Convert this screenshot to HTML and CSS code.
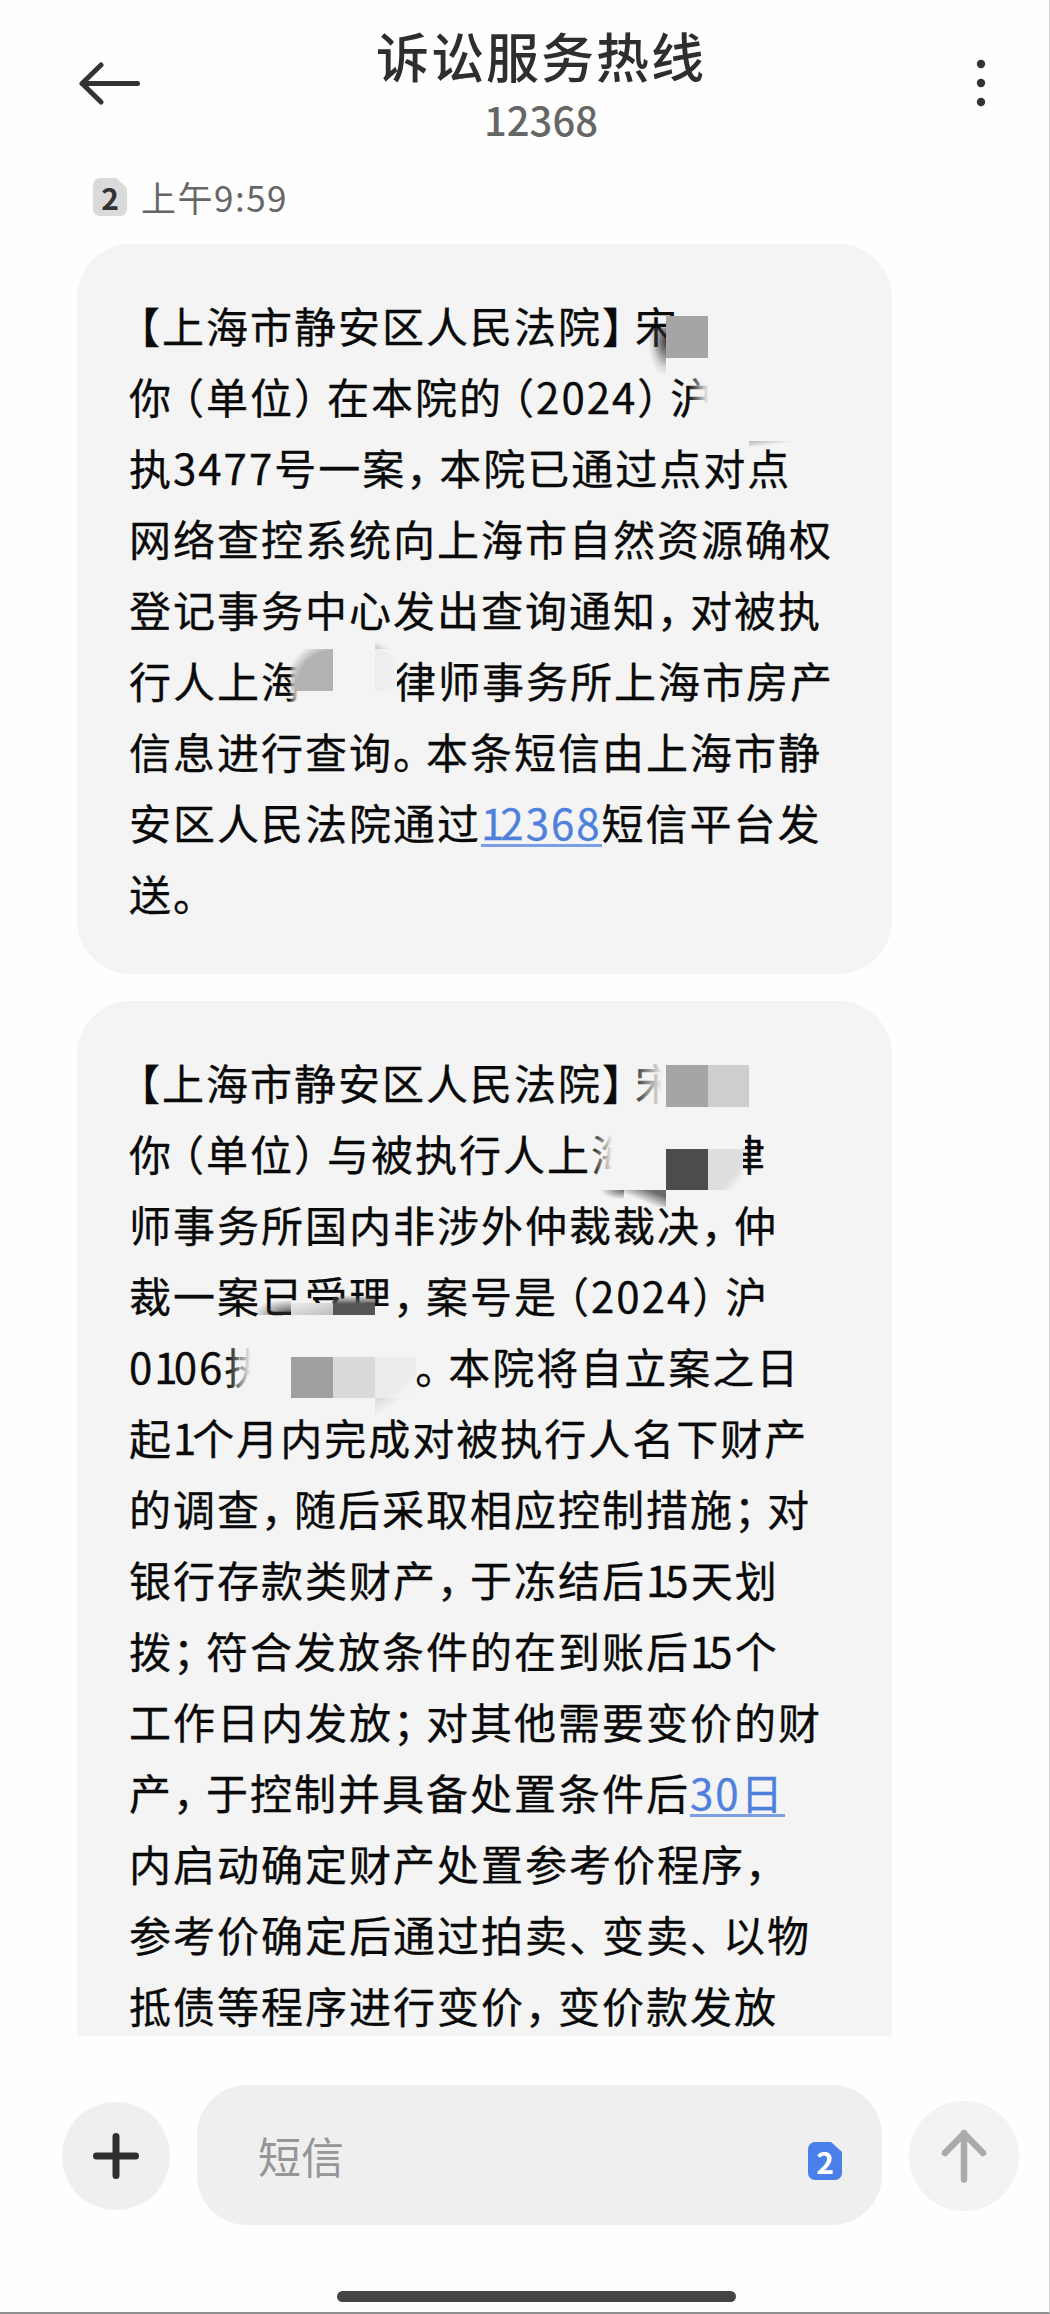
FILE: index.html
```html
<!DOCTYPE html>
<html lang="zh-CN">
<head>
    <meta charset="UTF-8">
    <meta name="viewport" content="width=device-width, initial-scale=1.0">
    <title>诉讼服务热线</title>
    <link rel="stylesheet" href="styles.css">
</head>
<body>
    <div class="phone">
        <header class="header">
            <svg class="back" viewBox="0 0 64 44" width="64" height="44">
                <path d="M23 4 L4 22.5 L23 41 M4 22.5 H59.5"/>
            </svg>
            <div class="heading">
                <h1>诉讼服务热线</h1>
                <p>12368</p>
            </div>
            <svg class="more" viewBox="0 0 10 50" width="10" height="50">
                <circle cx="5" cy="6" r="4.2"/>
                <circle cx="5" cy="25" r="4.2"/>
                <circle cx="5" cy="44" r="4.2"/>
            </svg>
        </header>

        <div class="stamp">
            <span class="sim">2</span>
            <span class="time">上午9:59</span>
        </div>

        <main class="messages">
            <div class="bubble">
                <p class="line">【上海市静安区人民法院】宋</p>
                <p class="line">你（单位）在本院的（2024）沪</p>
                <p class="line">执3477号一案，本院已通过点对点</p>
                <p class="line">网络查控系统向上海市自然资源确权</p>
                <p class="line">登记事务中心发出查询通知，对被执</p>
                <p class="line">行人上海<span class="gap"></span>律师事务所上海市房产</p>
                <p class="line">信息进行查询。本条短信由上海市静</p>
                <p class="line">安区人民法院通过<a href="#">12368</a>短信平台发</p>
                <p class="line">送。</p>
                <i class="mask m1-shade"></i>
                <i class="mask m1-name"></i>
                <i class="mask m1-case"></i>
                <i class="mask m1-edge"></i>
                <i class="mask m1-firm-fade"></i>
                <i class="mask m1-firm"></i>
                <i class="mask m1-firm-light"></i>
                <i class="mask m1-firm-tip"></i>
            </div>

            <div class="bubble">
                <p class="line">【上海市静安区人民法院】宋</p>
                <p class="line">你（单位）与被执行人上海<span class="gap firm"></span>律</p>
                <p class="line">师事务所国内非涉外仲裁裁决，仲</p>
                <p class="line">裁一案已受理，案号是（2024）沪</p>
                <p class="line">0106执<span class="gap wide"></span>。本院将自立案之日</p>
                <p class="line">起1个月内完成对被执行人名下财产</p>
                <p class="line">的调查，随后采取相应控制措施；对</p>
                <p class="line">银行存款类财产，于冻结后15天划</p>
                <p class="line">拨；符合发放条件的在到账后15个</p>
                <p class="line">工作日内发放；对其他需要变价的财</p>
                <p class="line">产，于控制并具备处置条件后<a href="#">30日</a></p>
                <p class="line">内启动确定财产处置参考价程序，</p>
                <p class="line">参考价确定后通过拍卖、变卖、以物</p>
                <p class="line">抵债等程序进行变价，变价款发放</p>
                <i class="mask m2-fade"></i>
                <i class="mask m2-name"></i>
                <i class="mask m2-name-light"></i>
                <i class="mask m2-firm-fade"></i>
                <i class="mask m2-firm"></i>
                <i class="mask m2-firm-light"></i>
                <i class="mask m2-firm-end"></i>
                <i class="mask m2-shade-left"></i>
                <i class="mask m2-shade"></i>
                <i class="mask m2-low-left"></i>
                <i class="mask m2-low-mid"></i>
                <i class="mask m2-low"></i>
                <i class="mask m2-low-right"></i>
                <i class="mask m2-low-end"></i>
                <i class="mask m2-case-fade"></i>
                <i class="mask m2-case-a"></i>
                <i class="mask m2-case-b"></i>
                <i class="mask m2-case-c"></i>
                <i class="mask m2-case-tip"></i>
            </div>
        </main>

        <footer class="composer">
            <div class="round plus">
                <svg viewBox="0 0 46 46" width="46" height="46"><path d="M23 3.5 V42.5 M3.5 23 H42.5"/></svg>
            </div>
            <div class="input">
                <span class="placeholder">短信</span>
                <span class="sim blue">2</span>
            </div>
            <div class="round send">
                <svg viewBox="0 0 46 54" width="46" height="54"><path d="M23 4 V50.5 M4 24 L23 4.5 L42 24"/></svg>
            </div>
        </footer>
        <div class="home-bar"></div>
    </div>

    <script src="script.js"></script>
</body>
</html>
```
FILE: styles.css
```css
* { box-sizing: border-box; margin: 0; padding: 0; }
body { font-family: "Noto Sans CJK SC", "Noto Sans", sans-serif; background: #fefefe; color: #0a0a0a; }
.phone { width: 1050px; height: 2314px; display: flex; flex-direction: column; overflow: hidden; border-right: 1px solid #cfcfcf; border-bottom: 2px solid #8f8f8f; }

/* header */
.header { height: 168px; flex: none; display: flex; justify-content: space-between; padding: 0 63px 0 78px; }
.heading { text-align: center; padding: 15px 36px 0 0; }
.heading h1 { font-size: 53px; line-height: 80px; font-weight: 500; letter-spacing: 2px; color: #2e2e2e; }
.heading p { font-size: 40px; line-height: 48px; font-weight: 500; color: #666; }
.back { margin-top: 61px; fill: none; stroke: #333; stroke-width: 5; stroke-linecap: round; stroke-linejoin: round; }
.more { margin-top: 58px; fill: #333; }

/* time of the messages */
.stamp { height: 76px; flex: none; display: flex; align-items: flex-start; padding: 10px 0 0 93px; gap: 14px; }
.sim { width: 34px; height: 38px; border-radius: 7px; background: #dadada; color: #333; font-size: 30px; line-height: 38px; font-weight: 700; text-align: center; clip-path: polygon(0 0, 68% 0, 100% 26%, 100% 100%, 0 100%); }
.time { font-size: 35px; line-height: 38px; letter-spacing: 1.5px; color: #666; }

/* messages */
.messages { height: 1792px; flex: none; overflow: hidden; padding-left: 77px; }
.bubble { position: relative; width: 815px; padding: 45px 0 46px 52px; border-radius: 54px; background: #f4f4f4; margin-bottom: 27px; }
.line { height: 71px; line-height: 71px; font-size: 42px; letter-spacing: 2px; white-space: nowrap; -webkit-text-stroke: 0.3px; }
.line a { color: #4f80dc; text-decoration: none; display: inline-block; height: 50px; line-height: 50px; border-bottom: 3px solid #7b9fe2; }
.gap { display: inline-block; width: 89px; }
.firm { width: 88px; }
.wide { width: 147px; }
.open { font-feature-settings: "halt"; margin-left: 10px; }
.close { font-feature-settings: "halt"; margin-right: 10px; }
.one { letter-spacing: -4px; }

/* mosaic over names and numbers */
.mask { position: absolute; }
.m1-shade { left: 572px; top: 84px; width: 17px; height: 46px; background: radial-gradient(ellipse at 100% 30%, rgba(30,30,30,.85), rgba(120,120,120,.25) 55%, rgba(244,244,244,0) 75%); }
.m1-name { left: 589px; top: 72px; width: 42px; height: 42px; background: #a5a5a5; }
.m1-case { left: 611px; top: 130px; width: 64px; height: 65px; background: linear-gradient(to right, rgba(244,244,244,0), #f4f4f4 32%); }
.m1-edge { left: 672px; top: 197px; width: 42px; height: 6px; background: linear-gradient(to bottom right, #b5b5b5, #f4f4f4 60%); }
.m1-firm-fade { left: 212px; top: 405px; width: 18px; height: 64px; background: linear-gradient(to right, rgba(244,244,244,0), #f4f4f4 50%); }
.m1-firm { left: 214px; top: 405px; width: 42px; height: 42px; background: radial-gradient(circle at 100% 90%, #b3b3b3 36px, rgba(190,190,190,0) 48px); }
.m1-firm-light { left: 298px; top: 405px; width: 22px; height: 42px; border-top-right-radius: 20px; background: linear-gradient(to right, #ececec, #f2f2f2); }
.m1-firm-tip { left: 298px; top: 398px; width: 14px; height: 7px; background: linear-gradient(to top right, #c4c4c4, #f4f4f4 60%); }
.m2-fade { left: 552px; top: 55px; width: 37px; height: 56px; background: linear-gradient(to right, rgba(244,244,244,0), #f4f4f4 90%); }
.m2-name { left: 589px; top: 64px; width: 42px; height: 42px; background: #a5a5a5; }
.m2-name-light { left: 631px; top: 64px; width: 41px; height: 42px; background: #cecece; }
.m2-firm-fade { left: 514px; top: 130px; width: 75px; height: 58px; background: linear-gradient(to right, rgba(244,244,244,0), #f4f4f4 28%); }
.m2-firm { left: 589px; top: 148px; width: 42px; height: 41px; background: #4c4c4c; }
.m2-firm-light { left: 631px; top: 148px; width: 35px; height: 41px; background: linear-gradient(to bottom right, #dedede 68%, #f4f4f4 86%); }
.m2-firm-end { left: 640px; top: 128px; width: 28px; height: 20px; background: #f4f4f4; }
.m2-shade-left { left: 524px; top: 189px; width: 23px; height: 9px; background: radial-gradient(ellipse at 100% 0, #666, rgba(160,160,160,0) 75%); }
.m2-shade { left: 547px; top: 189px; width: 42px; height: 17px; background: linear-gradient(to bottom left, #6a6a6a 20%, rgba(160,160,160,0) 62%); }
.m2-low-left { left: 180px; top: 300px; width: 34px; height: 14px; background: radial-gradient(ellipse at 100% 100%, rgba(40,40,40,.85), rgba(120,120,120,0) 80%); }
.m2-low-mid { left: 214px; top: 302px; width: 42px; height: 12px; background: linear-gradient(to top left, #bdbdbd, #ececec); }
.m2-low { left: 256px; top: 294px; width: 42px; height: 20px; background: linear-gradient(to bottom, rgba(85,85,85,0), #555 45%); }
.m2-low-right { left: 298px; top: 305px; width: 16px; height: 10px; background: #f4f4f4; }
.m2-low-end { left: 205px; top: 314px; width: 107px; height: 8px; background: #f4f4f4; }
.m2-case-fade { left: 150px; top: 335px; width: 46px; height: 64px; background: linear-gradient(to right, rgba(244,244,244,0), #f4f4f4 52%); }
.m2-case-a { left: 214px; top: 356px; width: 42px; height: 41px; background: #9f9f9f; }
.m2-case-b { left: 256px; top: 356px; width: 42px; height: 41px; background: #dadada; }
.m2-case-c { left: 298px; top: 356px; width: 41px; height: 41px; background: linear-gradient(135deg, #ececec 60%, #f2f2f2 80%); }
.m2-case-tip { left: 298px; top: 397px; width: 28px; height: 18px; background: linear-gradient(to bottom right, #d9d9d9, #f4f4f4 55%); }

/* input row */
.composer { height: 240px; flex: none; display: flex; align-items: center; padding: 0 30px 2px 62px; }
.round { width: 108px; height: 108px; margin-top: 2px; border-radius: 50%; background: #efefef; display: flex; align-items: center; justify-content: center; }
.round svg { fill: none; stroke: #2e2e2e; stroke-width: 7; stroke-linecap: round; stroke-linejoin: round; }
.send { width: 110px; height: 110px; background: #f3f3f3; }
.send svg { stroke: #aaa; stroke-width: 6.5; }
.input { width: 685px; height: 140px; margin: 0 27px; border-radius: 50px; background: #efefef; display: flex; align-items: center; justify-content: space-between; padding: 0 40px 0 61px; }
.placeholder { font-size: 43px; line-height: 60px; color: #969696; }
.blue { background: #4b7fea; color: #fff; margin-top: 12px; }
.home-bar { width: 399px; height: 11px; margin: 15px 0 0 337px; border-radius: 6px; background: #444; }
```
FILE: script.js
```js
// full-width punctuation is set tighter than the characters, and so is the digit 1
function tighten(node) {
    if (node.nodeType === Node.TEXT_NODE) {
        const span = document.createElement('span');
        span.innerHTML = node.textContent
            .replace(/[【（]/g, '<span class="open">$&</span>')
            .replace(/[】），。；、]/g, '<span class="close">$&</span>')
            .replace(/1/g, '<span class="one">1</span>');
        node.replaceWith(span);
        return;
    }
    [...node.childNodes].forEach(tighten);
}

document.querySelectorAll('.line').forEach(tighten);
```
